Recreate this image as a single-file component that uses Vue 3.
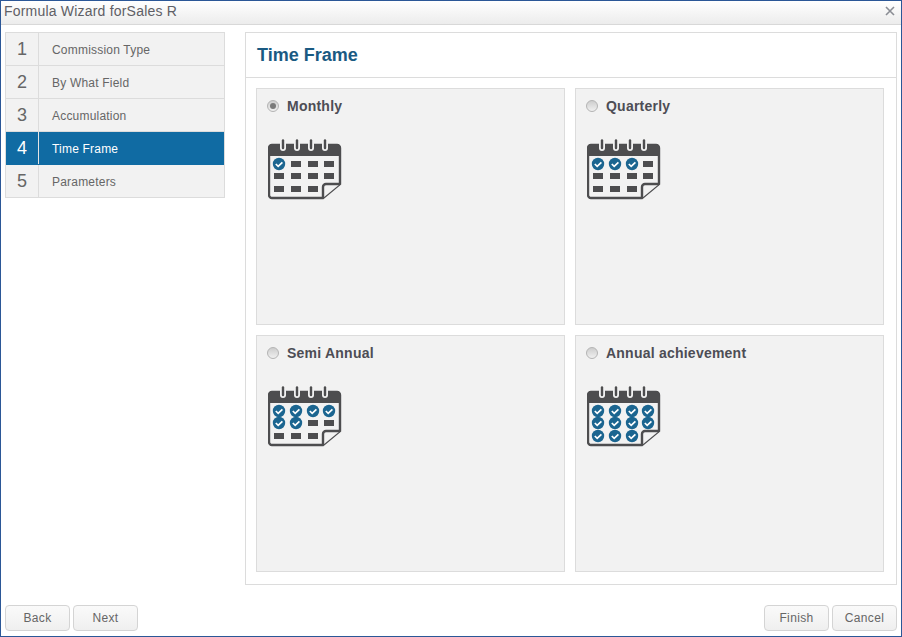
<template>
  <div class="wizard">
    <div class="title-bar">
      <span class="title">Formula Wizard forSales R</span>
      <svg class="close" width="10" height="10" viewBox="0 0 10 10">
        <path d="M1 1L9 9M9 1L1 9" stroke="#8a8d94" stroke-width="1.6" fill="none" />
      </svg>
    </div>

    <div class="body">
      <ul class="steps">
        <li v-for="(s, i) in steps" :key="s" :class="['step', { active: i === 3 }]">
          <span class="step-num">{{ i + 1 }}</span>
          <span class="step-label">{{ s }}</span>
        </li>
      </ul>

      <div class="panel">
        <div class="panel-head">Time Frame</div>
        <div class="cards">
          <div v-for="(c, idx) in cards" :key="c.name" class="card">
            <label class="option">
              <span :class="['radio', { checked: idx === 0 }]"></span>
              <span class="option-name">{{ c.name }}</span>
            </label>
            <svg class="cal" width="74" height="62" viewBox="0 0 74 62">
              <path
                d="M4 7H69a3 3 0 0 1 3 3V46L55 60H4a3 3 0 0 1-3-3V10a3 3 0 0 1 3-3Z"
                fill="none" stroke="#4d4d4f" stroke-width="2.4"
              />
              <path d="M4 6H69a3 3 0 0 1 3 3V18H1V9a3 3 0 0 1 3-3Z" fill="#4d4d4f" />
              <path
                d="M55 60V49a3 3 0 0 1 3-3H72"
                fill="#f2f2f2" stroke="#4d4d4f" stroke-width="2.4"
              />
              <g v-for="x in tubes" :key="x">
                <path :d="`M${x} 2.5V10`" stroke="#f2f2f2" stroke-width="6" stroke-linecap="round" />
                <path :d="`M${x} 2.5V10`" stroke="#4d4d4f" stroke-width="2.4" stroke-linecap="round" />
              </g>
              <template v-for="(cell, n) in cells" :key="n">
                <template v-if="n < c.checks">
                  <circle :cx="cell.x" :cy="cell.y" r="6.2" fill="#1b6590" />
                  <path
                    :d="`M${cell.x - 3.2} ${cell.y}l2.4 2.4 4.2-4`"
                    fill="none" stroke="#fff" stroke-width="1.7"
                  />
                </template>
                <rect v-else :x="cell.x - 5" :y="cell.y - 3" width="10" height="6" fill="#4d4d4f" />
              </template>
            </svg>
          </div>
        </div>
      </div>
    </div>

    <div class="footer">
      <div class="btns">
        <button class="btn">Back</button>
        <button class="btn">Next</button>
      </div>
      <div class="btns">
        <button class="btn">Finish</button>
        <button class="btn">Cancel</button>
      </div>
    </div>
  </div>
</template>

<script setup>
const steps = ['Commission Type', 'By What Field', 'Accumulation', 'Time Frame', 'Parameters']
const cards = [
  { name: 'Monthly', checks: 1 },
  { name: 'Quarterly', checks: 3 },
  { name: 'Semi Annual', checks: 6 },
  { name: 'Annual achievement', checks: 11 }
]
const tubes = [15, 29, 43, 57]

// 4 x 3 grid, last row has only three cells because of the folded corner
const cells = []
for (const y of [26, 38, 51]) {
  for (const x of [11, 28, 45, 61]) {
    if (y === 51 && x === 61) continue
    cells.push({ x, y })
  }
}
</script>

<style>
html, body { margin: 0; background: #fff; }
</style>

<style scoped>
.wizard { width: 902px; height: 637px; box-sizing: border-box; border: 1px solid #2b5797; background: #fff; display: flex; flex-direction: column; font-family: "Liberation Sans", Arial, sans-serif; overflow: hidden; }
.title-bar { height: 24px; flex-shrink: 0; box-sizing: border-box; display: flex; align-items: center; justify-content: space-between; padding: 0 6px 3px 3px; background: linear-gradient(#ffffff, #ececec); border-bottom: 1px solid #d8d8d8; }
.title { font-size: 14px; color: #5f5f66; letter-spacing: .2px; }
.close { display: block; }
.body { flex: 1; display: flex; align-items: flex-start; gap: 20px; padding: 7px 4px 0 4px; }
.steps { list-style: none; margin: 0; padding: 0; width: 220px; box-sizing: border-box; border: 1px solid #dcdcdc; flex-shrink: 0; }
.step { height: 33px; box-sizing: border-box; display: flex; background: #f2f2f2; border-bottom: 1px solid #dcdcdc; }
.step:last-child { height: 32px; border-bottom: 0; }
.step-num { width: 32px; flex-shrink: 0; border-right: 1px solid #dcdcdc; text-align: center; font-size: 18px; line-height: 32px; color: #666; }
.step-label { padding-left: 13px; font-size: 12px; line-height: 35px; color: #666; letter-spacing: .2px; }
.step.active { background: #106ba3; border-bottom-color: #106ba3; }
.step.active .step-num { color: #fff; border-right-color: #e4e4e4; }
.step.active .step-label { color: #fff; }
.panel { width: 652px; height: 553px; box-sizing: border-box; border: 1px solid #dcdcdc; flex-shrink: 0; }
.panel-head { height: 45px; box-sizing: border-box; padding-left: 11px; border-bottom: 1px solid #dcdcdc; font-size: 18px; font-weight: 700; line-height: 45px; color: #1a5a82; }
.cards { display: grid; grid-template-columns: 309px 309px; grid-template-rows: 237px 237px; gap: 10px; padding: 10px; }
.card { box-sizing: border-box; background: #f2f2f2; border: 1px solid #dcdcdc; padding: 8px 10px; }
.option { display: flex; align-items: center; gap: 8px; height: 18px; }
.radio { width: 12px; height: 12px; box-sizing: border-box; border-radius: 50%; border: 1px solid #b4b4b4; background: linear-gradient(#cdcdcd, #f0f0f0); position: relative; flex-shrink: 0; }
.radio.checked::after { content: ""; position: absolute; left: 2px; top: 2px; width: 6px; height: 6px; border-radius: 50%; background: #7a7a7a; }
.option-name { font-size: 14px; font-weight: 700; color: #4d4d55; letter-spacing: .23px; }
.cal { display: block; margin: 23px 0 0 1px; }
.footer { height: 38px; flex-shrink: 0; display: flex; justify-content: space-between; padding: 7px 4px 0 4px; box-sizing: border-box; }
.btns { display: flex; gap: 3px; }
.btn { width: 65px; height: 26px; box-sizing: border-box; padding: 0; border: 1px solid #d4d4d4; border-radius: 4px; background: linear-gradient(#fafafa, #efefef); font-family: inherit; font-size: 12px; color: #666; letter-spacing: .35px; }
</style>
